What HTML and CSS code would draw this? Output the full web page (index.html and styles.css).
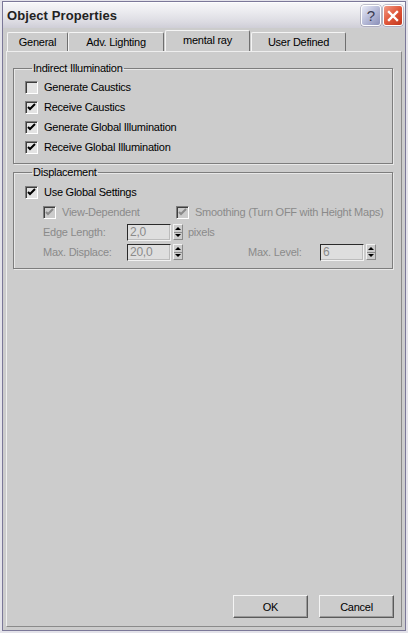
FILE: index.html
```html
<!DOCTYPE html>
<html>
<head>
<meta charset="utf-8">
<title>Object Properties</title>
<link rel="stylesheet" href="styles.css">
</head>
<body>
<div class="window">
  <div class="titlebar">
    <span class="title">Object Properties</span>
    <div class="caption-buttons">
      <button class="cap cap-help">?</button>
      <button class="cap cap-close">
        <svg width="12" height="12" viewBox="0 0 12 12"><path d="M2 2 L10 10 M10 2 L2 10" stroke="#fff" stroke-width="2.4" stroke-linecap="square"/></svg>
      </button>
    </div>
  </div>

  <div class="tabs">
    <div class="tab tab-general">General</div>
    <div class="tab tab-adv">Adv. Lighting</div>
    <div class="tab tab-mr active">mental ray</div>
    <div class="tab tab-user">User Defined</div>
  </div>

  <div class="panel">
    <fieldset class="group group-indirect">
      <legend>Indirect Illumination</legend>
      <label class="check-row"><span class="check"></span>Generate Caustics</label>
      <label class="check-row"><span class="check on"><svg viewBox="0 0 11 11"><path d="M2 5 L4 7 L9 2" /></svg></span>Receive Caustics</label>
      <label class="check-row"><span class="check on"><svg viewBox="0 0 11 11"><path d="M2 5 L4 7 L9 2" /></svg></span>Generate Global Illumination</label>
      <label class="check-row"><span class="check on"><svg viewBox="0 0 11 11"><path d="M2 5 L4 7 L9 2" /></svg></span>Receive Global Illumination</label>
    </fieldset>

    <fieldset class="group group-disp">
      <legend>Displacement</legend>
      <label class="check-row"><span class="check on"><svg viewBox="0 0 11 11"><path d="M2 5 L4 7 L9 2" /></svg></span>Use Global Settings</label>
      <div class="sub">
        <div class="sub-row">
          <label class="check-row disabled col-a"><span class="check on"><svg viewBox="0 0 11 11"><path d="M2 5 L4 7 L9 2" /></svg></span>View-Dependent</label>
          <label class="check-row disabled"><span class="check on"><svg viewBox="0 0 11 11"><path d="M2 5 L4 7 L9 2" /></svg></span>Smoothing (Turn OFF with Height Maps)</label>
        </div>
        <div class="sub-row">
          <span class="lbl">Edge Length:</span>
          <span class="spinner"><span class="field">2,0</span><span class="arrows"><span class="arr up"></span><span class="arr down"></span></span></span>
          <span class="unit">pixels</span>
        </div>
        <div class="sub-row">
          <span class="lbl">Max. Displace:</span>
          <span class="spinner"><span class="field">20,0</span><span class="arrows"><span class="arr up"></span><span class="arr down"></span></span></span>
          <span class="lbl lbl-level">Max. Level:</span>
          <span class="spinner"><span class="field">6</span><span class="arrows"><span class="arr up"></span><span class="arr down"></span></span></span>
        </div>
      </div>
    </fieldset>

    <div class="footer">
      <button class="btn">OK</button>
      <button class="btn">Cancel</button>
    </div>
  </div>
</div>
</body>
</html>
```
FILE: styles.css
```css
html, body {
  margin: 0;
  padding: 0;
}

body {
  background: #e4e3ea;
  font: 11px "Liberation Sans", Arial, sans-serif;
  letter-spacing: -0.25px;
  color: #000;
}

.window {
  box-sizing: border-box;
  width: 404px;
  height: 630px;
  margin: 1px 0 0 2px;
  border: 1px solid #7b7898;
  background: #cccccc;
  display: flex;
  flex-direction: column;
}

/* caption */
.titlebar {
  height: 25px;
  flex: none;
  display: flex;
  align-items: center;
  justify-content: space-between;
  padding: 0 2px 0 4px;
  background: linear-gradient(#f6f6f8 0%, #ebebef 35%, #dcdbe2 75%, #cfced7 100%);
  border-top: 1px solid #fdfdfe;
}

.title {
  font: bold 13px "Liberation Sans", Arial, sans-serif;
  color: #222;
  letter-spacing: 0.1px;
}

.caption-buttons {
  display: flex;
  gap: 2px;
}

.cap {
  width: 20px;
  height: 21px;
  padding: 0;
  border: 1px solid #fff;
  border-radius: 3px;
  display: flex;
  align-items: center;
  justify-content: center;
  box-shadow: 0 0 0 0.5px #8a8aa0;
}

.cap-help {
  background: linear-gradient(135deg, #e9ebf7 0%, #b7bbd8 50%, #8a8fb8 100%);
  font: 15px "Liberation Sans", Arial, sans-serif;
  color: #3a3a50;
}

.cap-close {
  background: linear-gradient(135deg, #f29b86 0%, #e0573a 50%, #c2351c 100%);
}

/* tab strip */
.tabs {
  height: 23px;
  flex: none;
  display: flex;
  align-items: flex-end;
  padding-left: 4px;
}

.tab {
  box-sizing: border-box;
  height: 19px;
  border-top: 1px solid #f4f4f4;
  border-left: 1px solid #f4f4f4;
  border-right: 1px solid #6f6f6f;
  border-radius: 2px 2px 0 0;
  display: flex;
  align-items: center;
  justify-content: center;
  padding-bottom: 1px;
}

.tab-general { width: 61px; }
.tab-adv { width: 96px; }
.tab-mr { width: 85px; margin-left: 1px; }
.tab-user { width: 95px; margin-left: 1px; }

.tab.active {
  height: 21px;
  padding-bottom: 3px;
}

/* tab page */
.panel {
  flex: 1;
  margin: 0 3px 3px;
  border-top: 1px solid #eeeeee;
  border-left: 1px solid #eeeeee;
  border-right: 1px solid #8a8a8a;
  border-bottom: 1px solid #8a8a8a;
  padding: 10px 6px 0 6px;
  display: flex;
  flex-direction: column;
}

.group {
  margin: 0;
  width: 380px;
  box-sizing: border-box;
  border: 1px solid #7d7d7d;
  box-shadow: 1px 1px 0 #e8e8e8, inset 1px 1px 0 #e8e8e8;
  padding: 2px 0 6px 11px;
}

.group legend {
  padding: 0 1px;
  margin-left: 7px;
  line-height: 13px;
}

.group-disp {
  margin-top: 2px;
  padding-top: 3px;
  padding-bottom: 6px;
}

.check-row {
  height: 20px;
  display: flex;
  align-items: center;
  gap: 6px;
  white-space: nowrap;
}

.check {
  box-sizing: border-box;
  width: 13px;
  height: 13px;
  flex: none;
  background: #e3e3e3;
  border-top: 1px solid #7e7e7e;
  border-left: 1px solid #7e7e7e;
  border-right: 1px solid #ffffff;
  border-bottom: 1px solid #ffffff;
  box-shadow: inset 1px 1px 0 #3e3e3e;
  display: flex;
}

.check svg {
  width: 11px;
  height: 11px;
}

.check svg path {
  fill: none;
  stroke: #000;
  stroke-width: 2;
}

.disabled {
  color: #8a8a8a;
}

.disabled .check {
  background: #cccccc;
}

.disabled .check svg path {
  stroke: #8a8a8a;
}

.sub {
  padding-left: 18px;
}

.sub-row {
  height: 20px;
  display: flex;
  align-items: center;
  color: #8a8a8a;
  white-space: nowrap;
}

.col-a {
  width: 133px;
  flex: none;
}

.lbl {
  width: 84px;
  flex: none;
}

.lbl-level {
  width: 72px;
  margin-left: 65px;
}

.spinner {
  display: flex;
  align-items: center;
  gap: 2px;
}

.field {
  box-sizing: border-box;
  width: 44px;
  height: 17px;
  background: #dedede;
  border-top: 1px solid #2a2a2a;
  border-left: 1px solid #2a2a2a;
  border-right: 1px solid #f2f2f2;
  border-bottom: 1px solid #f2f2f2;
  box-shadow: inset -1px -1px 0 #bcbcbc;
  padding-left: 2px;
  line-height: 14px;
  font-size: 12px;
  color: #8a8a8a;
}

.arrows {
  box-sizing: border-box;
  width: 10px;
  height: 16px;
  display: flex;
  flex-direction: column;
  border: 1px solid #8a8a8a;
  border-top-color: #f2f2f2;
  border-left-color: #f2f2f2;
}

.arr {
  flex: 1;
  display: flex;
  align-items: center;
  justify-content: center;
}

.arr.up {
  border-bottom: 1px solid #8a8a8a;
}

.arr.up::before {
  content: "";
  border-left: 3px solid transparent;
  border-right: 3px solid transparent;
  border-bottom: 3px solid #000;
}

.arr.down::before {
  content: "";
  border-left: 3px solid transparent;
  border-right: 3px solid transparent;
  border-top: 3px solid #000;
}

.unit {
  margin-left: 5px;
}

.footer {
  margin-top: auto;
  margin-bottom: 8px;
  display: flex;
  justify-content: flex-end;
  gap: 11px;
  padding-right: 1px;
}

.btn {
  box-sizing: border-box;
  width: 75px;
  height: 23px;
  background: #cccccc;
  font: 11px "Liberation Sans", Arial, sans-serif;
  letter-spacing: -0.25px;
  color: #000;
  border-top: 1px solid #f4f4f4;
  border-left: 1px solid #f4f4f4;
  border-right: 1px solid #5a5a5a;
  border-bottom: 1px solid #5a5a5a;
  box-shadow: inset -1px -1px 0 #9a9a9a;
  padding: 0;
}
```
